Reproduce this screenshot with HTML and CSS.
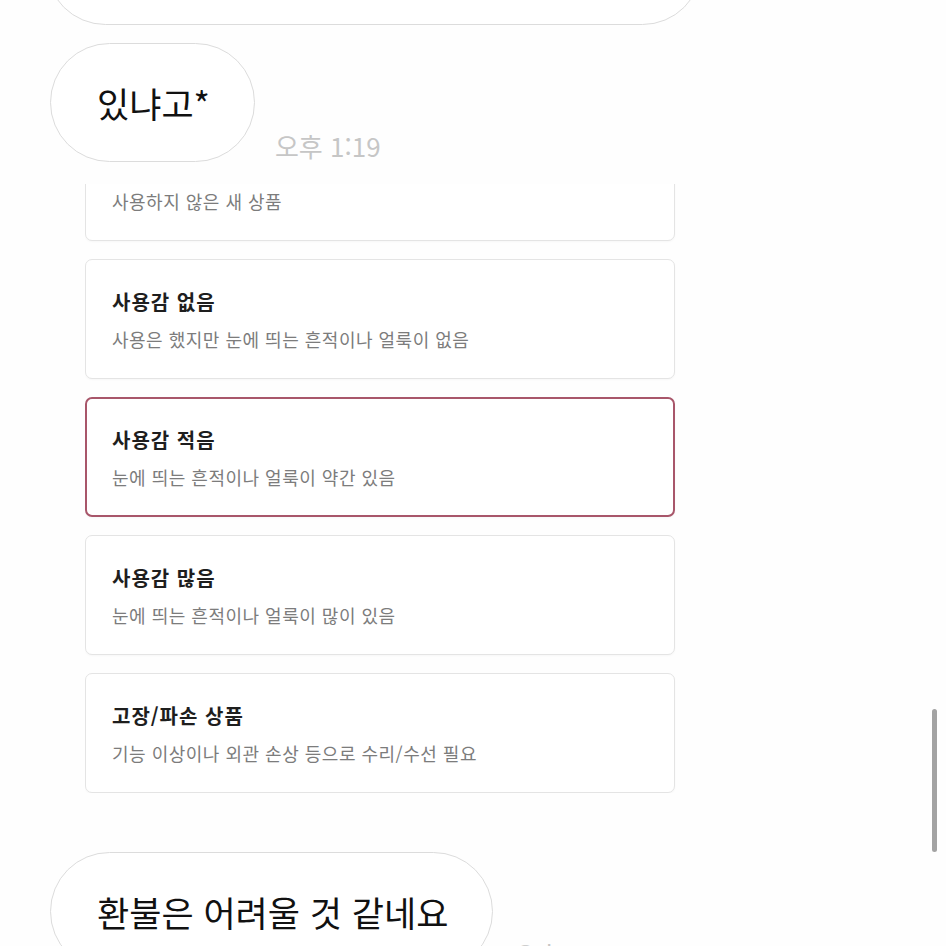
FILE: index.html
```html
<!DOCTYPE html>
<html lang="ko">
<head>
  <meta charset="UTF-8">
  <meta name="viewport" content="width=device-width, initial-scale=1.0">
  <title>채팅</title>
  <link rel="stylesheet" href="styles.css">
</head>
<body>

  <div class="chat">
    <div class="row row-top">
      <div class="bubble bubble-wide"></div>
    </div>

    <div class="row">
      <div class="bubble">있냐고*</div>
      <span class="time">오후 1:19</span>
    </div>

    <!-- attached screenshot of the condition picker -->
    <div class="shot">
      <ul class="cards">
        <li class="card">
          <div class="card-title"></div>
          <div class="card-desc">사용하지 않은 새 상품</div>
        </li>
        <li class="card">
          <div class="card-title">사용감 없음</div>
          <div class="card-desc">사용은 했지만 눈에 띄는 흔적이나 얼룩이 없음</div>
        </li>
        <li class="card selected">
          <div class="card-title">사용감 적음</div>
          <div class="card-desc">눈에 띄는 흔적이나 얼룩이 약간 있음</div>
        </li>
        <li class="card">
          <div class="card-title">사용감 많음</div>
          <div class="card-desc">눈에 띄는 흔적이나 얼룩이 많이 있음</div>
        </li>
        <li class="card">
          <div class="card-title">고장/파손 상품</div>
          <div class="card-desc">기능 이상이나 외관 손상 등으로 수리/수선 필요</div>
        </li>
      </ul>
    </div>

    <div class="row row-last">
      <div class="bubble">환불은 어려울 것 같네요</div>
      <span class="time">오후 1:20</span>
    </div>
  </div>

  <div class="scrollbar"></div>

</body>
</html>
```

FILE: styles.css
```css
body {
  margin: 0;
  padding: 0;
  background-color: #fefefe;
  font-family: "Noto Sans CJK KR", "Noto Sans", sans-serif;
  height: 946px;
  overflow: hidden;
}

.chat {
  display: flex;
  flex-direction: column;
}

.row {
  display: flex;
  align-items: flex-end;
  padding-left: 50px;
  margin-top: 18px;
}

.row-top {
  margin-top: -94px;
  padding-left: 46px;
}

.row-last {
  margin-top: 59px;
}

.bubble {
  box-sizing: border-box;
  height: 119px;
  display: flex;
  align-items: center;
  padding: 0 44px 0 46px;
  border: 1.5px solid #dcdcdc;
  border-radius: 60px;
  background-color: #fff;
  font-size: 35px;
  color: #111;
  white-space: nowrap;
}

.bubble-wide {
  width: 656px;
}

.time {
  margin-left: 20px;
  margin-bottom: 1px;
  font-size: 26px;
  line-height: 30px;
  color: #c6c6c6;
  white-space: nowrap;
}

.shot {
  margin: 22px 0 0 85px;
  width: 592px;
  height: 609px;
  overflow: hidden;
}

.cards {
  list-style: none;
  margin: -63px 0 0 0;
  padding: 0;
  display: flex;
  flex-direction: column;
  gap: 18px;
}

.card {
  box-sizing: border-box;
  width: 590px;
  height: 120px;
  padding: 29px 26px 0;
  border: 1px solid #e4e4e4;
  border-radius: 7px;
  background-color: #fff;
  box-shadow: 0 1px 2px rgba(0, 0, 0, 0.03);
}

.card.selected {
  border: 2px solid #a8566a;
  padding: 28px 25px 0;
}

.card-title {
  height: 26px;
  font-size: 20px;
  font-weight: 700;
  line-height: 26px;
  letter-spacing: 1px;
  color: #1e1e1e;
}

.card-desc {
  margin-top: 12px;
  font-size: 18px;
  line-height: 24px;
  letter-spacing: 0.5px;
  color: #7c7c7c;
}

.scrollbar {
  position: fixed;
  left: 932px;
  top: 709px;
  width: 5px;
  height: 143px;
  border-radius: 3px;
  background-color: #a3a3a3;
}
```
